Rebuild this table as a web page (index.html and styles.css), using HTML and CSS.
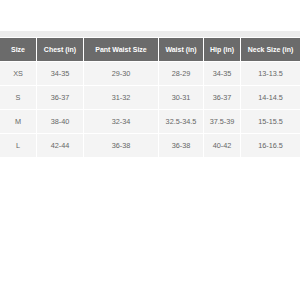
FILE: index.html
```html
<!DOCTYPE html>
<html>
<head>
<meta charset="utf-8">
<link rel="stylesheet" href="styles.css">
</head>
<body>
<div class="page">
  <div class="prev-band"></div>
  <div class="size-table">
    <div class="cell head">Size</div>
    <div class="cell head">Chest (in)</div>
    <div class="cell head">Pant Waist Size</div>
    <div class="cell head">Waist (in)</div>
    <div class="cell head">Hip (in)</div>
    <div class="cell head">Neck Size (in)</div>

    <div class="cell">XS</div>
    <div class="cell">34-35</div>
    <div class="cell">29-30</div>
    <div class="cell">28-29</div>
    <div class="cell">34-35</div>
    <div class="cell">13-13.5</div>

    <div class="cell">S</div>
    <div class="cell">36-37</div>
    <div class="cell">31-32</div>
    <div class="cell">30-31</div>
    <div class="cell">36-37</div>
    <div class="cell">14-14.5</div>

    <div class="cell">M</div>
    <div class="cell">38-40</div>
    <div class="cell">32-34</div>
    <div class="cell">32.5-34.5</div>
    <div class="cell">37.5-39</div>
    <div class="cell">15-15.5</div>

    <div class="cell">L</div>
    <div class="cell">42-44</div>
    <div class="cell">36-38</div>
    <div class="cell">36-38</div>
    <div class="cell">40-42</div>
    <div class="cell">16-16.5</div>
  </div>
</div>
</body>
</html>
```
FILE: styles.css
```css
html, body {
  margin: 0;
  padding: 0;
  background: #ffffff;
}
.page {
  width: 300px;
  height: 300px;
  padding-top: 31px;
  box-sizing: border-box;
  font-family: "Liberation Sans", Arial, sans-serif;
}
.prev-band {
  height: 6px;
  background: #ececec;
  margin-bottom: 1px;
}
.size-table {
  display: grid;
  grid-template-columns: 36px 46px 74px 44px 36px 1fr;
  grid-auto-rows: 23px;
  gap: 1px;
}
.cell {
  display: flex;
  align-items: center;
  justify-content: center;
  background: #f4f4f4;
  color: #666666;
  font-size: 7.3px;
}
.cell.head {
  background: #6b6b6b;
  color: #ffffff;
  font-weight: bold;
  font-size: 7px;
}
```
